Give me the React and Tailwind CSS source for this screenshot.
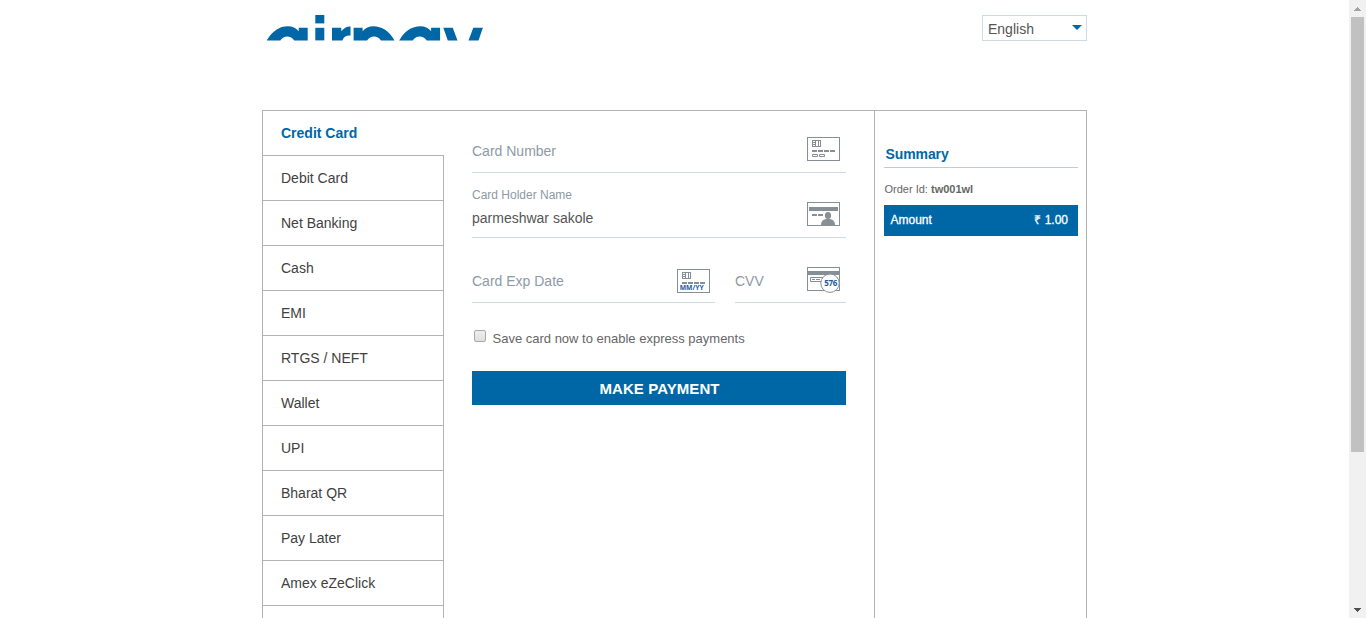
const methods = [
  "Debit Card",
  "Net Banking",
  "Cash",
  "EMI",
  "RTGS / NEFT",
  "Wallet",
  "UPI",
  "Bharat QR",
  "Pay Later",
  "Amex eZeClick",
  "",
];

const bowl =
  "M266.8 40.4Q275 26.3 288 26.3Q294.5 26.3 298.7 31.3V27.8H307.7V40.4H294.3Q291.5 36.6 287.3 36.6Q283 36.6 280.3 40.4Z";

function Logo() {
  return (
    <svg role="img" aria-label="airpay" width="216" height="26" viewBox="267 15 216 26" className="block">
      <g fill="#0067a6">
        <path d={bowl} />
        <rect x="315.3" y="15" width="9" height="8.4" />
        <rect x="315.3" y="27.8" width="9" height="12.6" />
        <path d="M332 27.8H341.3V31.3Q345 26.3 350.5 26.5V35.5Q344 35 342.5 40.4H332Z" />
        <path d={bowl} transform="translate(661.3 0) scale(-1 1)" />
        <path d={bowl} transform="translate(132.4 0)" />
        <polygon points="443.3,27.8 452.7,27.8 457.5,40.4 447.8,40.4" />
        <polygon points="473.3,27.8 482.9,27.8 478.5,40.4 468.5,40.4" />
      </g>
    </svg>
  );
}

function ChipLines() {
  return (
    <g fill="#868f96">
      <path d="M5 3h9v7h-9zM6 4v1h2v-1zM6 6v1h2v-1zM6 8v1h2v-1zM9 4v5h2v-5zM12 4v5h1v-5z" fillRule="evenodd" />
      <path d="M5 13h5v2h-5zM11 13h5v2h-5zM17 13h5v2h-5zM23 13h5v2h-5z" />
    </g>
  );
}

function Frame({ children }) {
  return (
    <svg width="33" height="26" viewBox="0 0 33 26" className="block shrink-0">
      <rect x="0.5" y="0.5" width="32" height="23" fill="#fff" stroke="#868f96" />
      {children}
    </svg>
  );
}

function CardIcon() {
  return (
    <Frame>
      <ChipLines />
      <path d="M5.5 17.5h5v2h-5zM12.5 17.5h5v2h-5z" fill="none" stroke="#868f96" />
    </Frame>
  );
}

function HolderIcon() {
  return (
    <Frame>
      <g fill="#868f96">
        <path d="M2 5h29v4h-29zM5 12h5v2h-5zM11 12h5v2h-5z" />
        <ellipse cx="21" cy="13.7" rx="4" ry="4.6" fill="#fff" />
        <ellipse cx="21" cy="13.5" rx="3.1" ry="3.6" />
        <path d="M14 23c0-3.5 1.5-5.3 5-6h4c3.5.7 5 2.5 5 6z" />
      </g>
    </Frame>
  );
}

function DateIcon() {
  return (
    <Frame>
      <ChipLines />
      <text x="2.7" y="21.3" textLength="24" lengthAdjust="spacingAndGlyphs" className="fill-[#1a5a9c] font-['Open_Sans',sans-serif] text-[7.5px] font-bold">
        MM/YY
      </text>
    </Frame>
  );
}

function CvvIcon() {
  return (
    <Frame>
      <path d="M0 4h33v4h-33z" fill="#868f96" />
      <path d="M3.5 10.5h14v4h-14z" fill="none" stroke="#868f96" />
      <path d="M5 12.5h3M9 12.5h4" stroke="#868f96" />
      <circle cx="23" cy="16.2" r="9.2" fill="#fff" stroke="#868f96" />
      <text x="17.3" y="18.6" textLength="13" className="fill-[#1a5a9c] font-['Open_Sans',sans-serif] text-[8px] font-bold">
        576
      </text>
    </Frame>
  );
}

function Scrollbar() {
  return (
    <div className="flex h-full w-[17px] shrink-0 flex-col items-center bg-[#f1f1f1]">
      <div className="flex h-[17px] shrink-0 items-center">
        <svg width="7" height="4" shapeRendering="crispEdges">
          <path d="M3 0h1v1h-1zM2 1h3v1h-3zM1 2h5v1h-5zM0 3h7v1h-7z" fill="#a3a3a3" />
        </svg>
      </div>
      <div className="h-[435px] w-[13px] bg-[#c1c1c1]" />
      <div className="mt-auto flex h-[17px] shrink-0 items-center">
        <svg width="7" height="4" shapeRendering="crispEdges">
          <path d="M0 0h7v1h-7zM1 1h5v1h-5zM2 2h3v1h-3zM3 3h1v1h-1z" fill="#505050" />
        </svg>
      </div>
    </div>
  );
}

export default function App() {
  return (
    <div className="flex h-[618px] w-[1366px] overflow-hidden bg-white font-['Liberation_Sans',Arial,sans-serif] text-sm text-[#414141]">
      <div className="flex flex-1 flex-col items-center">
        <header className="flex h-[110px] w-[825px] shrink-0 items-start justify-between pt-[15px] pl-[5px]">
          <Logo />
          <div className="flex h-[26px] w-[105px] items-center justify-between border border-[#d0dbe1] pr-1 pl-[5px]">
            <span className="pt-[2px] leading-4 text-[#555]">English</span>
            <svg width="10" height="5" className="mb-[2px]">
              <path d="M0 0h10L5 5z" fill="#0067a6" />
            </svg>
          </div>
        </header>

        <main className="flex h-[560px] w-[825px] shrink-0 border border-[#b3b3b3]">
          <nav className="w-[181px] shrink-0">
            <div className="flex h-[45px] items-center border-b border-[#b3b3b3] pl-[18px] font-bold text-[#0067a6]">
              Credit Card
            </div>
            <ul className="border-r border-[#b3b3b3]">
              {methods.map((m, i) => (
                <li key={i} className="flex h-[45px] items-center border-b border-[#b3b3b3] pl-[18px]">
                  {m}
                </li>
              ))}
            </ul>
          </nav>

          <section className="w-[430px] shrink-0 px-7">
            <div className="flex h-[62px] w-[374px] items-start justify-between border-b border-[#d0dbe1] pt-[26px] pr-[6px] text-[#8d9aa5]">
              <span className="pt-[4px] leading-5">Card Number</span>
              <CardIcon />
            </div>
            <div className="flex h-[65px] w-[374px] items-start justify-between border-b border-[#d0dbe1] pt-[14px] pr-[6px]">
              <div>
                <div className="text-xs leading-4 text-[#8d9aa5]">Card Holder Name</div>
                <div className="pt-[5px] leading-5 text-[#555]">parmeshwar sakole</div>
              </div>
              <div className="pt-[15px]">
                <HolderIcon />
              </div>
            </div>
            <div className="flex w-[374px] gap-5 text-[#8d9aa5]">
              <div className="flex h-[65px] w-[243px] items-start justify-between border-b border-[#d0dbe1] pt-[31px] pr-[5px]">
                <span className="pt-[2px] leading-5">Card Exp Date</span>
                <DateIcon />
              </div>
              <div className="flex h-[65px] w-[111px] items-start justify-between border-b border-[#d0dbe1] pt-[29px] pr-[6px]">
                <span className="pt-[4px] leading-5">CVV</span>
                <CvvIcon />
              </div>
            </div>
            <label className="mt-[27px] flex h-[16px] items-start pl-[2px] text-[13px] leading-4 text-[#666]">
              <span className="mr-[6.5px] block h-3 w-3 rounded-[2px] border border-[#a9a9a9] bg-linear-to-b from-[#f0f0f0] to-[#dedede]" />
              <span className="pt-px">Save card now to enable express payments</span>
            </label>
            <button className="mt-[25px] block h-[34px] w-[374px] bg-[#0067a6] pt-px pl-px text-[15px] font-bold tracking-[0.08px] text-white">
              MAKE PAYMENT
            </button>
          </section>

          <aside className="flex-1 border-l border-[#b3b3b3] pt-[34px] pr-2 pl-[9px]">
            <h2 className="h-[23px] border-b border-[#bdced3] pl-[1.5px] text-sm leading-[19px] font-bold tracking-[-0.1px] text-[#0067a6]">
              Summary
            </h2>
            <p className="pt-[13px] pl-[0.5px] text-[11px] leading-4 text-[#666]">
              Order Id: <b>tw001wl</b>
            </p>
            <div className="mt-2 flex h-[31px] items-center justify-between bg-[#0067a6] pr-[10px] pb-[2px] pl-[6.5px] text-xs text-white [-webkit-text-stroke:0.3px_white]">
              <span>Amount</span>
              <span>₹ 1.00</span>
            </div>
          </aside>
        </main>
      </div>
      <Scrollbar />
    </div>
  );
}
